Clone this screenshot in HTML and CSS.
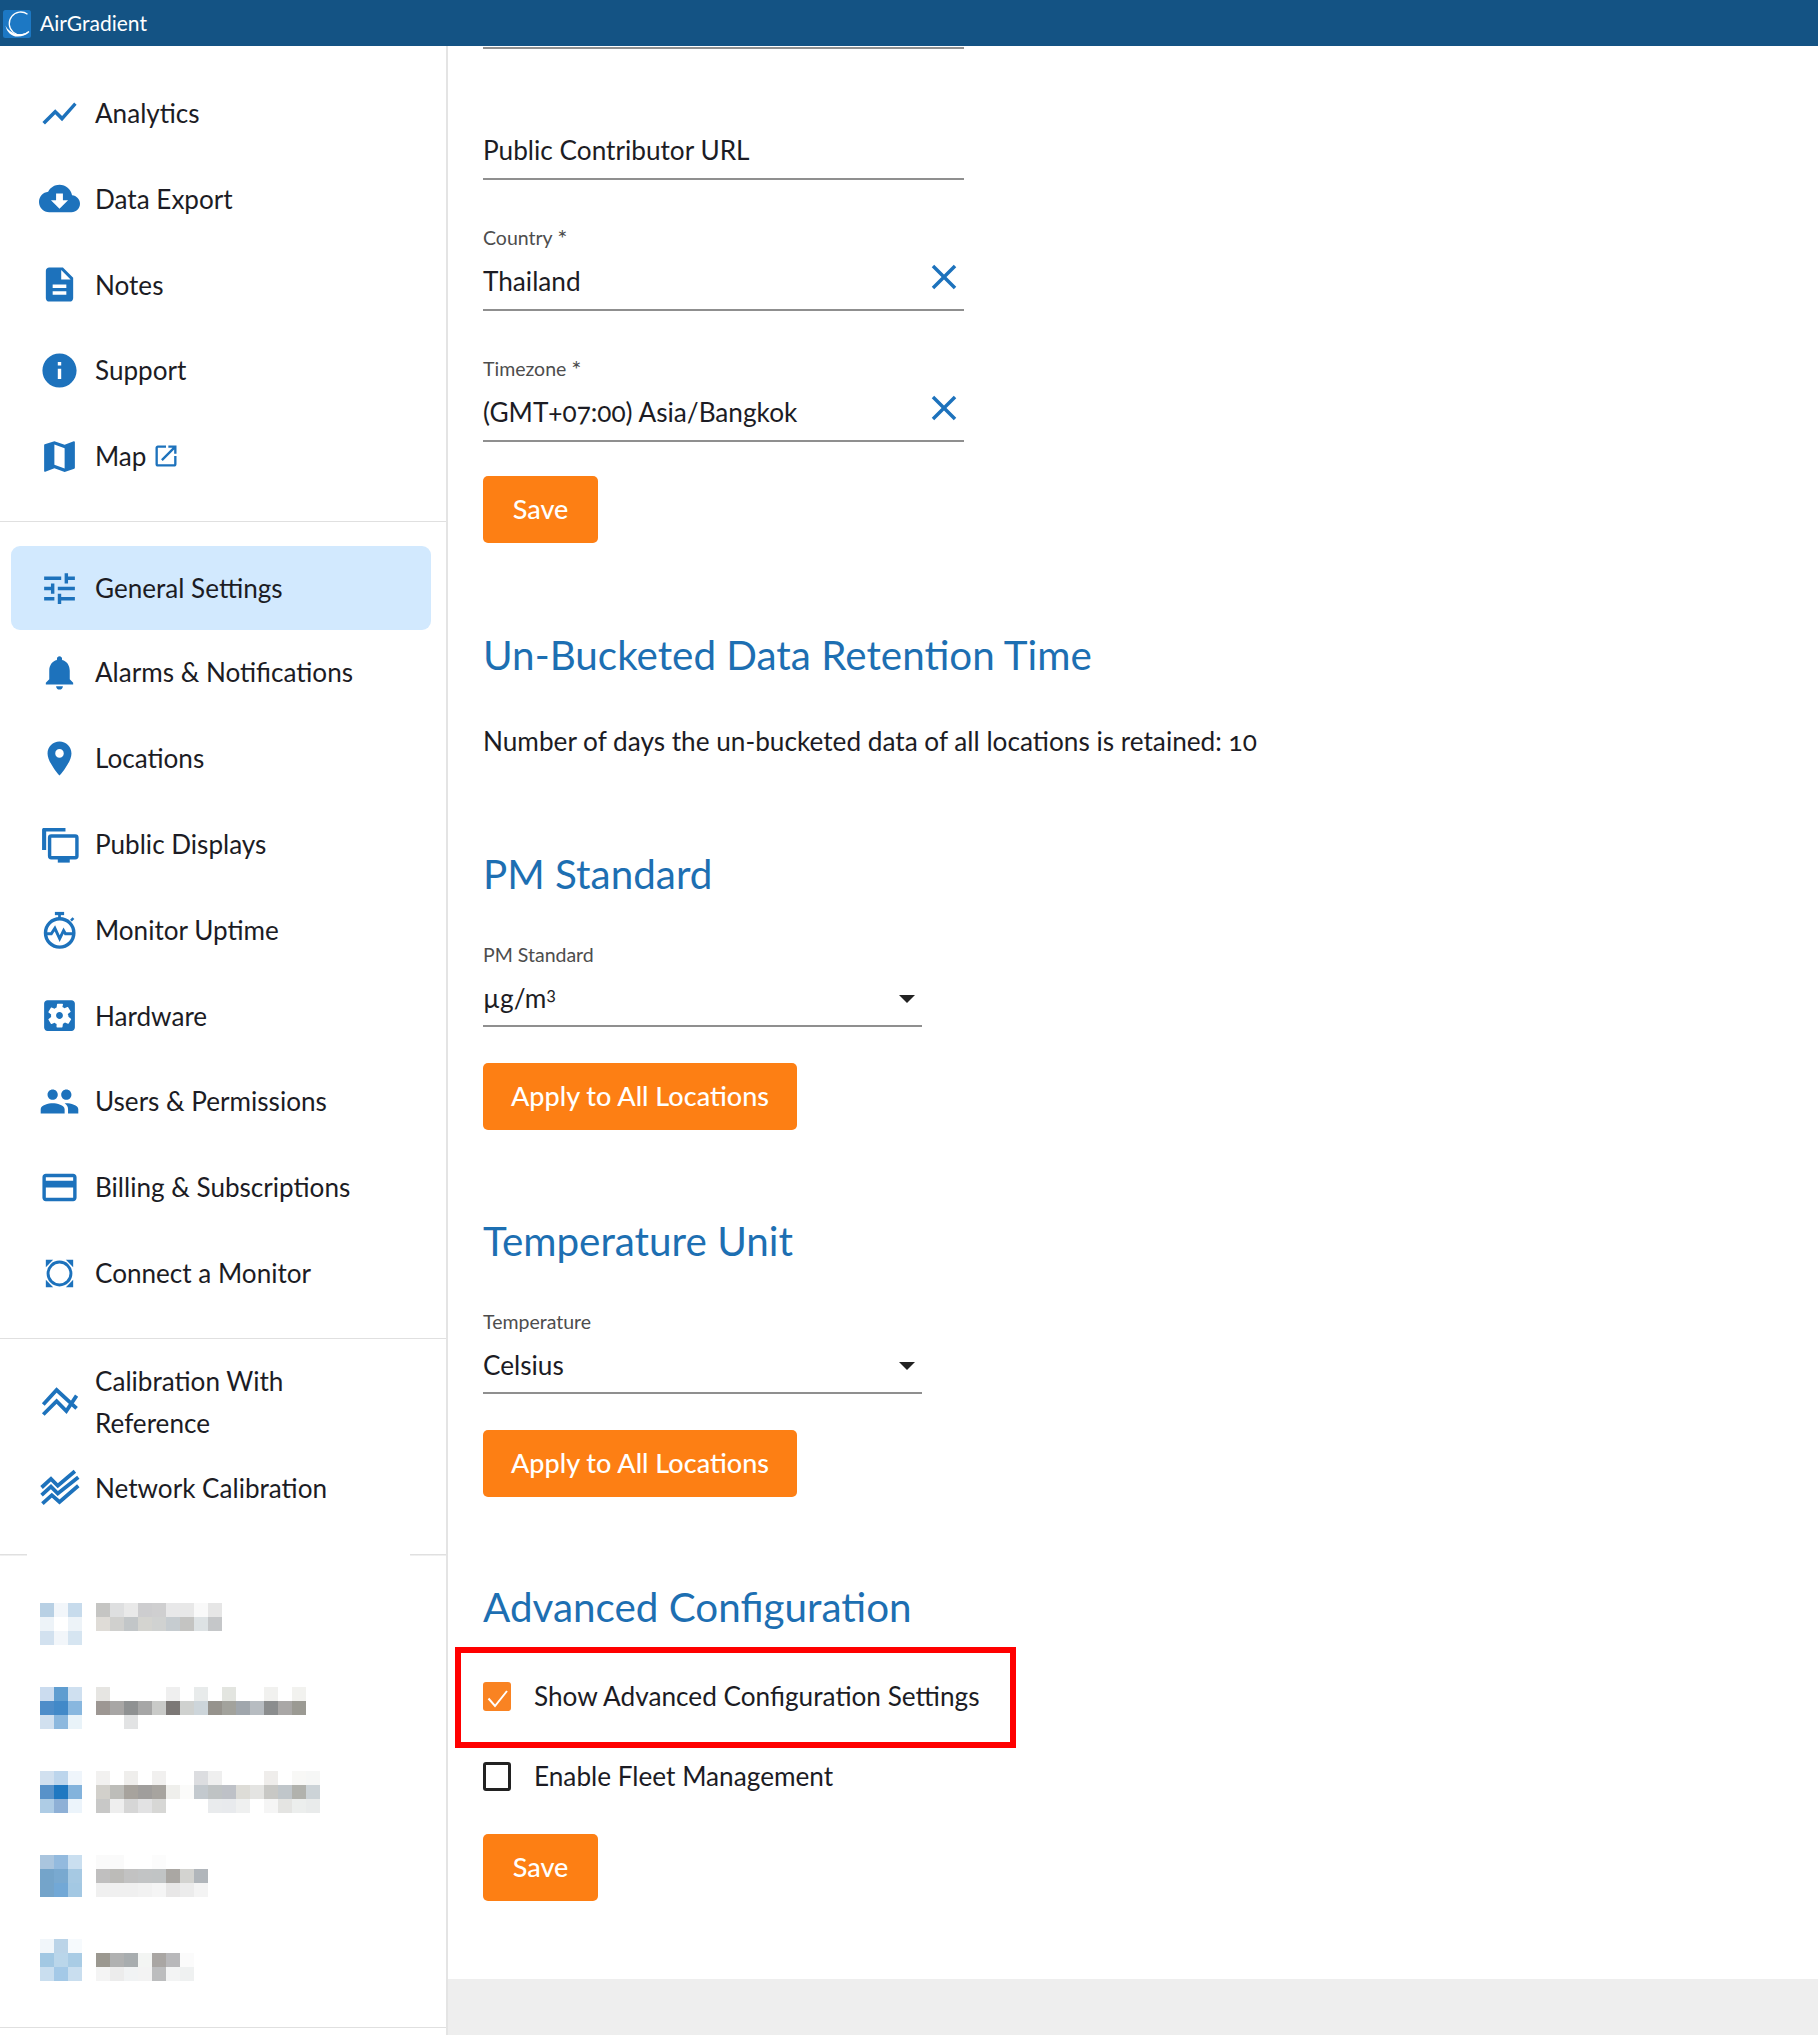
FILE: index.html
```html
<!DOCTYPE html>
<html lang="en">
<head>
<meta charset="utf-8">
<title>AirGradient – General Settings</title>
<link rel="stylesheet" href="styles.css">
</head>
<body>
<header class="topbar">
  <svg class="logo" viewBox="0 0 28 28"><rect width="28" height="28" rx="2.5" fill="#1c78c4"/><path d="M24.5 4.2A11.5 11.5 0 1 0 26 21.5" fill="none" stroke="#fff" stroke-width="1.300"/><path d="M2.500 15.500C3.500 22 9 27 15 26.600c4.500-.2 8-2 11-5.600-3 2.300-7 3.800-11 3.200C9.500 23.500 4.500 20 2.500 15.500z" fill="#fff"/></svg>
  <span class="brand">AirGradient</span>
</header>
<div class="layout">
  <nav class="sidebar">
    <div class="group group-first">
      <a class="item"><svg class="icon" viewBox="0 0 24 24"><path d="M3.500 18.490l6-6.010 4 4L22 6.920l-1.410-1.410-7.090 7.970-4-4L2 16.990z"/></svg><span>Analytics</span></a>
      <a class="item"><svg class="icon" viewBox="0 0 24 24"><path d="M19.350 10.040C18.670 6.590 15.640 4 12 4 9.110 4 6.600 5.640 5.350 8.040 2.340 8.360 0 10.910 0 14c0 3.310 2.690 6 6 6h13c2.760 0 5-2.240 5-5 0-2.640-2.050-4.780-4.650-4.960zM17 13l-5 5-5-5h3V9h4v4h3z"/></svg><span>Data Export</span></a>
      <a class="item"><svg class="icon" viewBox="0 0 24 24"><path d="M14 2H6c-1.100 0-1.990.9-1.990 2L4 20c0 1.100.89 2 1.990 2H18c1.100 0 2-.9 2-2V8l-6-6zm2 16H8v-2h8v2zm0-4H8v-2h8v2zm-3-5V3.500L18.500 9H13z"/></svg><span>Notes</span></a>
      <a class="item"><svg class="icon" viewBox="0 0 24 24"><path d="M12 2C6.480 2 2 6.480 2 12s4.480 10 10 10 10-4.480 10-10S17.520 2 12 2zm1 15h-2v-6h2v6zm0-8h-2V7h2v2z"/></svg><span>Support</span></a>
      <a class="item"><svg class="icon" viewBox="0 0 24 24"><path d="M20.500 3l-.16.03L15 5.100 9 3 3.360 4.900c-.21.07-.36.25-.36.48V20.500c0 .28.22.5.5.5l.16-.03L9 18.900l6 2.100 5.640-1.900c.21-.07.36-.25.36-.48V3.500c0-.28-.22-.5-.5-.5zM15 19l-6-2.110V5l6 2.110V19z"/></svg><span>Map</span><svg class="ext" viewBox="0 0 24 24"><path d="M19 19H5V5h7V3H5c-1.110 0-2 .9-2 2v14c0 1.100.89 2 2 2h14c1.100 0 2-.9 2-2v-7h-2v7zM14 3v2h3.590l-9.830 9.830 1.410 1.410L19 6.410V10h2V3h-7z"/></svg></a>
    </div>
    <div class="group group-main">
      <a class="item active"><svg class="icon" viewBox="0 0 24 24"><path d="M3 17v2h6v-2H3zM3 5v2h10V5H3zm10 16v-2h8v-2h-8v-2h-2v6h2zM7 9v2H3v2h4v2h2V9H7zm14 4v-2H11v2h10zm-6-4h2V7h4V5h-4V3h-2v6z"/></svg><span>General Settings</span></a>
      <a class="item"><svg class="icon" viewBox="0 0 24 24"><path d="M12 22c1.100 0 2-.9 2-2h-4c0 1.100.89 2 2 2zm6-6v-5c0-3.070-1.640-5.640-4.500-6.320V4c0-.83-.67-1.500-1.500-1.500s-1.500.67-1.500 1.500v.68C7.630 5.360 6 7.920 6 11v5l-2 2v1h16v-1l-2-2z"/></svg><span>Alarms &amp; Notifications</span></a>
      <a class="item"><svg class="icon" viewBox="0 0 24 24"><path d="M12 2C8.130 2 5 5.130 5 9c0 5.250 7 13 7 13s7-7.750 7-13c0-3.870-3.130-7-7-7zm0 9.500c-1.380 0-2.500-1.120-2.500-2.500s1.120-2.500 2.500-2.500 2.500 1.120 2.500 2.500-1.120 2.500-2.500 2.500z"/></svg><span>Locations</span></a>
      <a class="item"><svg class="icon" viewBox="0 0 24 24"><path d="M2.800 2.400h12.700v2H4.200v10.800h-2.400V3.400c0-.6.400-1 1-1z"/><rect x="6.200" y="7" width="16" height="12.800" rx="1" fill="none" stroke="currentColor" stroke-width="2"/><rect x="11" y="20" width="7" height="2.600"/></svg><span>Public Displays</span></a>
      <a class="item"><svg class="icon" viewBox="0 0 24 24"><rect x="9.300" y="1.700" width="5.400" height="1.900"/><rect x="11.200" y="3.500" width="1.600" height="2.500"/><path d="M18.200 6.300l1.400-1.500 1.100 1.100-1.500 1.400z"/><circle cx="12.100" cy="14" r="8.300" fill="none" stroke="currentColor" stroke-width="2"/><path d="M4 14.500h3.200l2.100-3.200 2.800 6 2.300-4.700 1.100 1.900h4.400" fill="none" stroke="currentColor" stroke-width="1.700"/></svg><span>Monitor Uptime</span></a>
      <a class="item"><svg class="icon" viewBox="0 0 24 24"><path d="M12 10c-1.100 0-2 .9-2 2s.9 2 2 2 2-.9 2-2-.9-2-2-2zm7-7H5c-1.110 0-2 .9-2 2v14c0 1.100.89 2 2 2h14c1.110 0 2-.9 2-2V5c0-1.100-.89-2-2-2zm-1.750 9c0 .23-.02.46-.05.68l1.480 1.160c.13.11.17.3.08.45l-1.400 2.420c-.09.15-.27.21-.43.15l-1.740-.7c-.36.28-.76.51-1.180.69l-.26 1.850c-.03.17-.18.3-.35.3h-2.800c-.17 0-.32-.13-.35-.3L10.300 17c-.43-.18-.82-.41-1.180-.69l-1.740.7c-.16.06-.34 0-.43-.15l-1.400-2.420c-.09-.15-.05-.34.08-.45l1.480-1.160c-.03-.23-.05-.46-.05-.69 0-.23.02-.46.05-.68l-1.480-1.160c-.13-.11-.17-.3-.08-.45l1.400-2.420c.09-.15.27-.21.43-.15l1.740.7c.36-.28.76-.51 1.180-.69l.26-1.850c.03-.17.18-.3.35-.3h2.800c.17 0 .32.13.35.3L13.700 7c.43.18.82.41 1.180.69l1.740-.7c.16-.06.34 0 .43.15l1.400 2.420c.09.15.05.34-.08.45l-1.480 1.160c.03.23.05.46.05.68z"/></svg><span>Hardware</span></a>
      <a class="item"><svg class="icon" viewBox="0 0 24 24"><path d="M16 11c1.660 0 2.990-1.340 2.990-3S17.660 5 16 5c-1.660 0-3 1.340-3 3s1.340 3 3 3zm-8 0c1.660 0 2.990-1.340 2.990-3S9.660 5 8 5C6.340 5 5 6.340 5 8s1.340 3 3 3zm0 2c-2.330 0-7 1.170-7 3.500V19h14v-2.500c0-2.330-4.670-3.500-7-3.500zm8 0c-.29 0-.62.02-.97.05 1.160.84 1.970 1.970 1.970 3.450V19h6v-2.500c0-2.330-4.670-3.500-7-3.500z"/></svg><span>Users &amp; Permissions</span></a>
      <a class="item"><svg class="icon" viewBox="0 0 24 24"><path d="M20 4H4c-1.110 0-1.990.89-1.990 2L2 18c0 1.110.89 2 2 2h16c1.110 0 2-.89 2-2V6c0-1.110-.89-2-2-2zm0 14H4v-6h16v6zm0-10H4V6h16v2z"/></svg><span>Billing &amp; Subscriptions</span></a>
      <a class="item"><svg class="icon" viewBox="0 0 24 24"><path d="M4 4h4.300L4 8.300zM20 4h-4.300L20 8.300zM4 20h4.300L4 15.700zM20 20h-4.300l4.300-4.300z"/><circle cx="12" cy="12" r="6.700" fill="none" stroke="currentColor" stroke-width="1.700"/></svg><span>Connect a Monitor</span></a>
    </div>
    <div class="group group-tight">
      <a class="item"><svg class="icon" viewBox="0 0 24 24"><path d="M2.500 13.200l7.800-8.500L22 15.500M2.500 19l7.800-7.800 5.700 5.800 6-9" fill="none" stroke="currentColor" stroke-width="2.200"/></svg><span class="wrap">Calibration With Reference</span></a>
      <a class="item"><svg class="icon" viewBox="0 0 24 24"><path d="M1.500 12l5.500-5 4 4L21 2.500M1.500 16.500l5.500-5 4 4L23 6M2 21.500l5.500-5 4.500 4L23 11" fill="none" stroke="currentColor" stroke-width="2.200"/></svg><span>Network Calibration</span></a>
    </div>
    <div class="mosaics" id="mosaics"></div>
    <div class="sidebar-end"></div>
  </nav>
  <main class="main">
    <div class="content">
      <div class="cut-line"></div>
      <div class="field field-url"><div class="value"><span>Public Contributor URL</span></div></div>
      <div class="field"><label class="label">Country <span class="req">*</span></label><div class="value"><span>Thailand</span><svg class="clear" viewBox="0 0 24 24"><path d="M19 6.410L17.590 5 12 10.590 6.410 5 5 6.410 10.590 12 5 17.590 6.410 19 12 13.410 17.590 19 19 17.590 13.410 12z"/></svg></div></div>
      <div class="field"><label class="label">Timezone <span class="req">*</span></label><div class="value"><span>(GMT+07:00) Asia/Bangkok</span><svg class="clear" viewBox="0 0 24 24"><path d="M19 6.410L17.590 5 12 10.590 6.410 5 5 6.410 10.590 12 5 17.590 6.410 19 12 13.410 17.590 19 19 17.590 13.410 12z"/></svg></div></div>
      <button class="btn btn-first">Save</button>

      <h2 class="title">Un-Bucketed Data Retention Time</h2>
      <p class="text">Number of days the un-bucketed data of all locations is retained: 10</p>

      <h2 class="title">PM Standard</h2>
      <div class="field select"><label class="label">PM Standard</label><div class="value"><span>µg/m<sup class="sup">3</sup></span><svg class="arrow" viewBox="7 10 10 5"><path d="M7 10l5 5 5-5z"/></svg></div></div>
      <button class="btn">Apply to All Locations</button>

      <h2 class="title title-temp">Temperature Unit</h2>
      <div class="field select"><label class="label">Temperature</label><div class="value"><span>Celsius</span><svg class="arrow" viewBox="7 10 10 5"><path d="M7 10l5 5 5-5z"/></svg></div></div>
      <button class="btn">Apply to All Locations</button>

      <h2 class="title title-adv">Advanced Configuration</h2>
      <div class="check first-check">
        <span class="box on"><svg viewBox="0 0 28 29"><path d="M5.500 16.500L12 24 24 9" fill="none" stroke="#fff" stroke-width="2"/></svg></span>
        <span>Show Advanced Configuration Settings</span>
        <div class="redbox"></div>
      </div>
      <div class="check"><span class="box"></span><span>Enable Fleet Management</span></div>
      <button class="btn btn-last">Save</button>
    </div>
    <div class="footer"></div>
  </main>
</div>
<script src="pixels.js"></script>
</body>
</html>
```
FILE: styles.css
```css
* { box-sizing: border-box; }
html, body { margin: 0; padding: 0; }
body {
  width: 1818px;
  height: 2035px;
  overflow: hidden;
  background: #fff;
  color: #1c1c24;
  font-family: "Lato", "Noto Sans", sans-serif;
  font-size: 26.200px;
  font-variant-numeric: oldstyle-nums;
}
.topbar {
  height: 46px;
  background: #145384;
  display: flex;
  align-items: center;
  padding-left: 3px;
}
.logo { width: 28px; height: 28px; flex: none; margin-top: 1px; }
.brand { margin-left: 9px; padding-bottom: 2px; color: #fff; font-size: 21px; }
.layout { display: flex; height: 1989px; }
.sidebar {
  width: 448px;
  flex: none;
  border-right: 2px solid #e4e4e4;
  display: flex;
  flex-direction: column;
}
.group {
  display: flex;
  flex-direction: column;
  gap: 1.800px;
  padding: 24px 15px 23px 11px;
  border-bottom: 1.500px solid #e0e0e0;
}
.group-first { padding-top: 25px; }
.group-tight {
  padding-top: 21px;
  border-bottom: none;
  padding-bottom: 24px;
}
.item {
  height: 84px;
  display: flex;
  align-items: center;
  padding-left: 28px;
  border-radius: 9px;
  color: #1c1c24;
  font-size: 26.100px;
  line-height: 42px;
}
.item.active { background: #d2e9fe; margin-bottom: -1.500px; }
.icon {
  width: 41px;
  height: 41px;
  flex: none;
  margin-right: 15px;
  fill: currentColor;
  color: #1d72bc;
}
.wrap { width: 260px; }
.ext { width: 28px; height: 28px; margin-left: 6px; fill: #1d72bc; }
.mosaics {
  flex: 1;
  display: flex;
  flex-direction: column;
  gap: 42px;
  padding: 49px 0 0 40px;
  background: linear-gradient(to right, #e0e0e0 27px, transparent 27px, transparent 410px, #e0e0e0 410px) top left / 100% 1.500px no-repeat;
}
.mosaic-row { display: flex; gap: 14px; height: 42px; }
.mosaic { display: flex; flex-direction: column; }
.mosaic-line { display: flex; height: 14px; }
.mosaic-cell { width: 14px; height: 14px; }
.sidebar-end { height: 8px; border-top: 1.500px solid #e0e0e0; }

.main { flex: 1; display: flex; flex-direction: column; }
.content { height: 1933px; padding-left: 35px; }
.cut-line { width: 481px; height: 2px; margin-top: 1px; background: #8f8f8f; }
.field { width: 481px; margin-top: 47px; }
.field-url { margin-top: 80px; }
.select { width: 439px; margin-top: 42px; }
.select .value { height: 50px; }
.label { display: block; height: 22px; line-height: 22px; font-size: 19.500px; color: #4d4d4d; margin-bottom: 11px; }
.req { font-size: 24px; line-height: 0; vertical-align: -2px; }
.value {
  height: 51px;
  line-height: 42px;
  padding-bottom: 7px;
  border-bottom: 2px solid #8f8f8f;
  display: flex;
  justify-content: space-between;
  position: relative;
}
.sup { font-size: 18px; line-height: 0; vertical-align: 8px; }
.clear { position: absolute; right: -1px; top: -4px; width: 42px; height: 42px; fill: #1d72bc; }
.arrow { position: absolute; right: 7px; top: 18px; width: 16px; height: 8px; fill: #222; }
.btn {
  display: block;
  min-width: 115px;
  height: 67px;
  padding: 0 28px 2px;
  border: none;
  border-radius: 5px;
  background: #fd7f14;
  color: #fff;
  font: 500 27px "Lato", sans-serif;
  margin-top: 36px;
}
.btn-first { margin-top: 34px; }
.btn-last { margin-top: 37px; }
.title {
  margin: 84px 0 0;
  height: 56px;
  line-height: 56px;
  font-size: 40.400px;
  font-weight: 400;
  color: #1d6fb2;
}
.title-temp { margin-top: 83px; }
.title-adv { margin-top: 82px; }
.text { margin: 37px 0 0; line-height: 42px; }
.check { display: flex; align-items: center; gap: 23px; height: 42px; margin-top: 38px; position: relative; }
.first-check { margin-top: 40px; }
.box {
  width: 28px;
  height: 29px;
  flex: none;
  border: 3.500px solid #222;
  border-radius: 3px;
}
.box.on { background: #f98322; border: none; }
.box.on svg { display: block; width: 28px; height: 29px; }
.redbox {
  position: absolute;
  left: -28px;
  top: -28px;
  width: 561px;
  height: 101px;
  border: 6.500px solid #f00;
  pointer-events: none;
}
.footer { flex: 1; background: #eee; }
```
FILE: pixels.js
```js
var rows = [
  { icon: ["b8d0e4 f2f6fa c7dbec", "edf3f8 ffffff edf3f8", "d2e1ef f2f6fa d6e5f1"],
    text: ["c5c5c3 dedfe0 e9e9e9 cdcdcf cfcfd0 e8e8e9 e8e8e8 f9f9f9 e6e6e6",
           "dfdcd7 d0d0ce c2c6c8 d4d4d0 d0d2d1 c6ccd0 c4c4c2 dde2e4 c5c7c9"] },
  { icon: ["cbdcef 5f9dd0 cfe0f0", "4e8dc9 4289c8 88b7df", "d1e0ef 8cb8de e9f3f9"],
    text: ["e6e5e2 ffffff ffffff ffffff ffffff efefef ffffff e8ebeb ffffff e3e5e0 ffffff ffffff f1f1ef ffffff f2f2ef",
           "9d9793 a8a6a5 8f9192 a6a6a6 c9cac8 7c7876 cfd1cf cdd5da 96938d a2a29c a0a6ac b7bcc1 8b8d8e a9a7a6 9b9a93",
           "ffffff ffffff e2e3e4"] },
  { icon: ["d1e0ef bcd5ec eff5fb", "5892c9 1f78c1 83b3dc", "aecce5 8eb0d6 ecf4fb"],
    text: ["f2f1f0 ffffff efeeec ffffff f1f0ef ffffff ffffff dcdde0 efefef ffffff ffffff ffffff efedeb ffffff f8f8f6 f6f7f6",
           "d2d0cb bdbdb9 a7a39d a09e9c a7a49f efefec fbfbfa c3c9ce bfc3c4 bec1c7 dddcd7 e4e4e2 c8c8c5 c0c6ca b1b2ad ccd3d7",
           "c8c8c7 eeeeee d6d6d6 e2e2e3 d7d7d5 ffffff ffffff ffffff e9ebed e8eaed eff0f0 ffffff f5f5f5 e4e4e2 eceeed e9ebeb"] },
  { icon: ["aac5de 93bade cadff0", "74a4ca 79a9d0 a6c9e3", "74a4ca 72a8d6 a3c8e3"],
    text: ["fafafa fafafa ffffff ffffff fcfcfc ffffff ffffff ffffff",
           "c0bfbf bcbbb8 c2c2c2 c2c4c5 c1c4c5 aaa7a3 d3d3d0 b1b6bb",
           "f0f0f0 f0f0f0 f0f0f0 f2f2f2 f5f5f5 e8e7e7 ececec f4f4f4"] },
  { icon: ["f1f6fa bbd4e8 f6fafd", "a2c8e3 bad6ea a9cce5", "c9deef a4c9e7 c9deef"],
    text: ["ffffff ffffff ffffff ffffff ffffff ffffff ffffff",
           "9b9890 b0b1b1 a8adaf f3f5f3 a9a6a3 b8b8ba fbfbfb",
           "f4f4f4 ececec f1f3f4 f3f3f3 bcbdbe f3f4f4 eff1f1"] }
];

function mosaic(lines) {
  var m = document.createElement("div");
  m.className = "mosaic";
  lines.forEach(function (line) {
    var l = document.createElement("div");
    l.className = "mosaic-line";
    line.split(" ").forEach(function (hex) {
      var c = document.createElement("div");
      c.className = "mosaic-cell";
      c.style.background = "#" + hex;
      l.appendChild(c);
    });
    m.appendChild(l);
  });
  return m;
}

var host = document.getElementById("mosaics");
rows.forEach(function (r) {
  var row = document.createElement("div");
  row.className = "mosaic-row";
  row.appendChild(mosaic(r.icon));
  row.appendChild(mosaic(r.text));
  host.appendChild(row);
});
```
